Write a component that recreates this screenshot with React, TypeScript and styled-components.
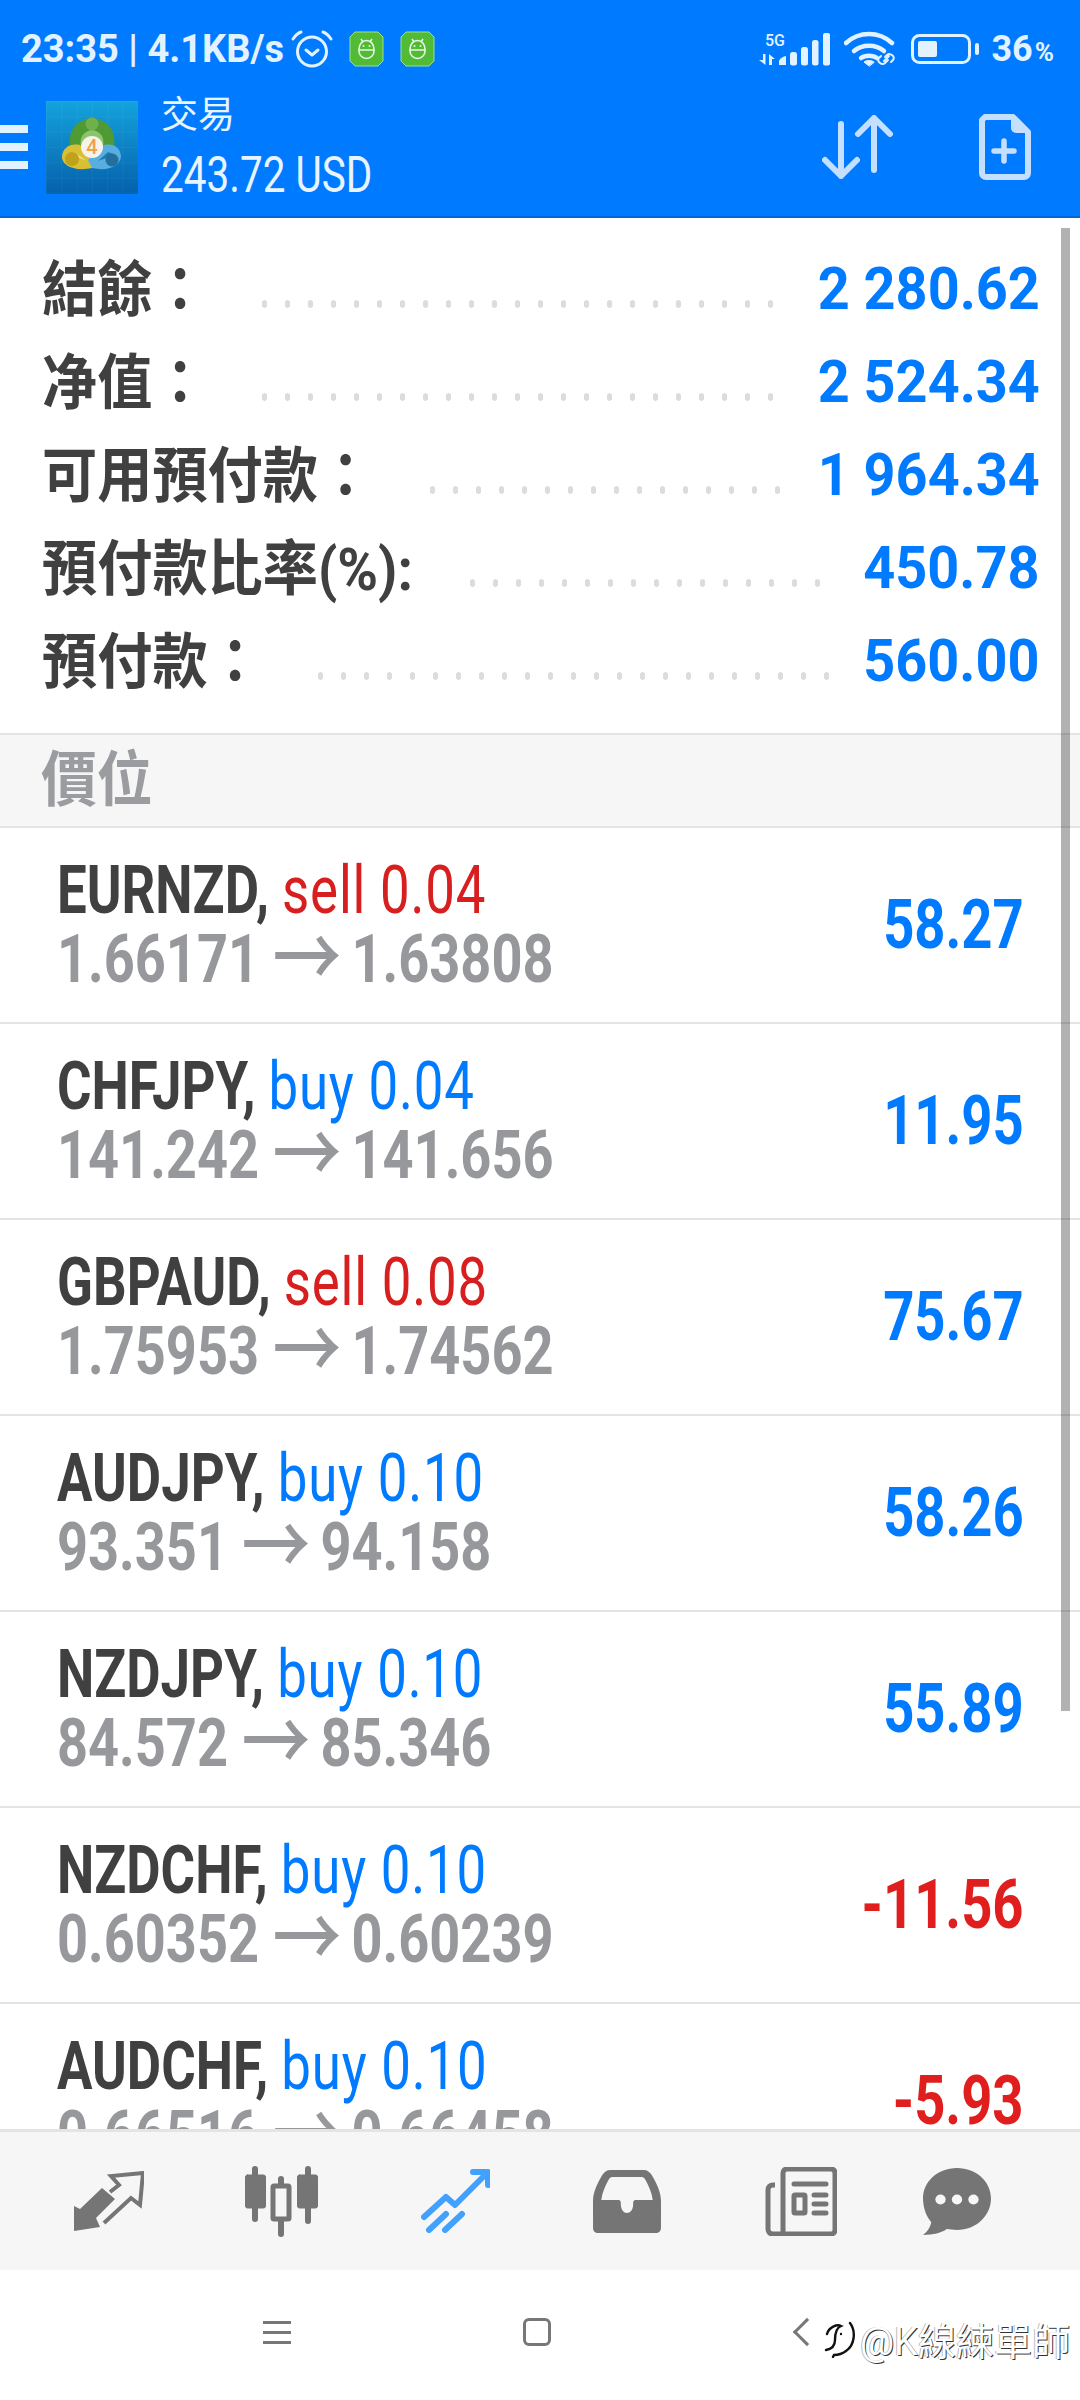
import React from 'react';
import styled, {createGlobalStyle} from 'styled-components';

const GlobalStyle = createGlobalStyle`
  html, body {
    margin: 0;
    padding: 0;
    background: #fff;
  }
  * {
    box-sizing: border-box;
  }
`;

const BLUE = '#007aff';
const RED = '#d81f1f';
const FONT = `Roboto, "Noto Sans CJK TC", sans-serif`;

const summary = [
  {label: '結餘：', value: '2 280.62', labelWidth: 211, valueWidth: 258},
  {label: '净值：', value: '2 524.34', labelWidth: 211, valueWidth: 258},
  {label: '可用預付款：', value: '1 964.34', labelWidth: 379, valueWidth: 251},
  {label: '預付款比率(%):', value: '450.78', labelWidth: 419, valueWidth: 211},
  {label: '預付款：', value: '560.00', labelWidth: 267, valueWidth: 202},
];

const positions = [
  {symbol: 'EURNZD,', side: 'sell 0.04', open: '1.66171', close: '1.63808', profit: '58.27'},
  {symbol: 'CHFJPY,', side: 'buy 0.04', open: '141.242', close: '141.656', profit: '11.95'},
  {symbol: 'GBPAUD,', side: 'sell 0.08', open: '1.75953', close: '1.74562', profit: '75.67'},
  {symbol: 'AUDJPY,', side: 'buy 0.10', open: '93.351', close: '94.158', profit: '58.26'},
  {symbol: 'NZDJPY,', side: 'buy 0.10', open: '84.572', close: '85.346', profit: '55.89'},
  {symbol: 'NZDCHF,', side: 'buy 0.10', open: '0.60352', close: '0.60239', profit: '-11.56'},
  {symbol: 'AUDCHF,', side: 'buy 0.10', open: '0.66516', close: '0.66458', profit: '-5.93'},
];

const AndroidBadge = () => (
  <svg width="35" height="36" viewBox="0 0 35 36">
    <path d="M6 1h23l5 5v24l-5 5H6l-5-5V6z" fill="#52bb36" stroke="#9adf8c" strokeWidth="1" />
    <path d="M10 18a7.5 8.5 0 0 1 15 0v2a7.5 7.5 0 0 1-15 0z" fill="none" stroke="#e8f8e2" strokeWidth="1.6" />
    <path d="M10 19h15M12 8l2 3M23 8l-2 3" stroke="#e8f8e2" strokeWidth="1.6" fill="none" />
    <circle cx="14.5" cy="15" r="1" fill="#e8f8e2" />
    <circle cx="20.5" cy="15" r="1" fill="#e8f8e2" />
  </svg>
);

const AlarmIcon = () => (
  <svg width="42" height="38" viewBox="0 0 42 38" fill="none" stroke="#e3f2ff" strokeLinecap="round">
    <circle cx="21" cy="21.5" r="14.5" strokeWidth="3" />
    <path d="M15 20l6 5 6-5" strokeWidth="3" strokeLinejoin="round" />
    <path d="M2 9c2-3 5-6 8-7M40 9c-2-3-5-6-8-7" strokeWidth="3" />
  </svg>
);

const SignalIcon = () => (
  <svg width="71" height="33" viewBox="0 0 71 33" fill="#e3f2ff">
    <text x="6" y="13" fontFamily="Roboto, sans-serif" fontSize="16" fontWeight="500">5G</text>
    <path d="M4 21h2.500v11L0 27h4zM10 32V21l6 5h-3v6z" />
    <path d="M20 32v-4c0-2 5-5 7-5v9z" />
    <rect x="31" y="19" width="7" height="13.500" rx="2.500" />
    <rect x="42" y="14" width="7" height="18.500" rx="2.500" />
    <rect x="53" y="7" width="6.500" height="25.500" rx="2.500" />
    <rect x="64" y="0" width="7" height="32.500" rx="2" />
  </svg>
);

const WifiIcon = () => (
  <svg width="53" height="36" viewBox="0 0 53 36" fill="none" stroke="#e3f2ff" strokeLinecap="round">
    <path d="M2 12c13-12 33-12 46 0" strokeWidth="4.500" />
    <path d="M10 20c8-7 22-7 30 0" strokeWidth="4.500" />
    <path d="M17 27c4-3 12-3 16 0" strokeWidth="4.500" />
    <path d="M25 35l-5-4c2-2 8-2 10 0z" fill="#e3f2ff" strokeWidth="1" />
    <path d="M40 30l5-5M41 26l2-2c3-3 9 2 6 5l-2 2M44 29l-3 3c-3 3-9-2-6-5l2-2" strokeWidth="2" />
  </svg>
);

const BatteryIcon = () => (
  <svg width="68" height="30" viewBox="0 0 68 30">
    <rect x="1.500" y="1.500" width="57" height="27" rx="7" fill="none" stroke="#e3f2ff" strokeWidth="3" />
    <rect x="7" y="7" width="19" height="16" rx="2" fill="#e3f2ff" />
    <rect x="64" y="9" width="4" height="12" rx="2" fill="#e3f2ff" />
  </svg>
);

const MtLogo = () => (
  <svg width="92" height="93" viewBox="0 0 92 93">
    <defs>
      <linearGradient id="logoBg" x1="0" y1="0" x2="0" y2="1">
        <stop offset="0" stopColor="#14a3dc" />
        <stop offset="1" stopColor="#0560ab" />
      </linearGradient>
      <pattern id="logoGrid" width="15.300" height="15.300" patternUnits="userSpaceOnUse">
        <path d="M15.300 0H0V15.300" fill="none" stroke="#fff" strokeOpacity=".08" strokeWidth="1" />
      </pattern>
    </defs>
    <rect width="92" height="93" fill="url(#logoBg)" />
    <rect width="92" height="93" fill="url(#logoGrid)" />
    <path d="M46 17c-17 2-26 14-21 34h42c5-20-4-32-21-34z" fill="#4f9a35" />
    <path d="M46 29c-8 1-13 7-11 16h22c2-9-3-15-11-16z" fill="#8cc46a" />
    <path d="M34 44c-10-2-17 3-18 11-1 9 12 16 30 12l4-8z" fill="#d9bf33" />
    <path d="M28 51c-4 1-6 2-6 4 5 0 13 2 19 5z" fill="#efe08a" />
    <path d="M58 44c10-2 16 3 17 11 0 9-12 16-29 12l-4-8z" fill="#58aede" />
    <path d="M62 51c3 1 6 2 6 4-5 1-11 3-16 5z" fill="#1f79b4" />
    <circle cx="46" cy="23" r="6.500" fill="#6eb14b" />
    <circle cx="26" cy="58" r="7" fill="#bfa11c" />
    <circle cx="66" cy="59" r="6.500" fill="#226f9d" />
    <circle cx="46" cy="46" r="11" fill="#f7f2ea" />
    <text x="46" y="53" textAnchor="middle" fontFamily="Roboto, sans-serif" fontSize="20" fontWeight="500" fill="#f0a24a">4</text>
  </svg>
);

const SortIcon = () => (
  <svg width="72" height="64" viewBox="0 0 72 64" fill="none" stroke="#c5e0ff" strokeWidth="6" strokeLinecap="round" strokeLinejoin="round">
    <path d="M19 9v52M3 45l16 16 16-16" />
    <path d="M52 3v52M36 19L52 3l16 16" />
  </svg>
);

const NewOrderIcon = () => (
  <svg width="52" height="66" viewBox="0 0 52 66">
    <path d="M6 3h28l15 15v41a4 4 0 0 1-4 4H7a4 4 0 0 1-4-4V6z" fill="none" stroke="#c5e0ff" strokeWidth="6" strokeLinejoin="round" />
    <path d="M32 2v12a5 5 0 0 0 5 5h13z" fill="#c5e0ff" />
    <path d="M15 37h20M25 27v20" stroke="#c5e0ff" strokeWidth="5.500" strokeLinecap="round" />
  </svg>
);

const TradeIcon = () => (
  <svg width="70" height="60" viewBox="0 0 70 60">
    <path d="M0 60V35l6 3 22-21 13 11-19 19 4 9z" fill="#757575" strokeLinejoin="round" />
    <path d="M30 52L57 27l9 7 3-32-32 3 8 9-9 7" fill="none" stroke="#757575" strokeWidth="4" />
  </svg>
);

const CandleIcon = () => (
  <svg width="73" height="71" viewBox="0 0 73 71" fill="#757575" stroke="#757575" strokeLinecap="round">
    <path d="M10 3v50M36 13v55M63 3v52" strokeWidth="6" fill="none" />
    <rect x="0.500" y="9" width="20" height="33" rx="2" strokeWidth="1" />
    <rect x="28" y="20" width="16" height="33" rx="1" fill="#f6f6f6" strokeWidth="5" />
    <rect x="52.500" y="9" width="20" height="33" rx="2" strokeWidth="1" />
  </svg>
);

const TrendIcon = () => (
  <svg width="69" height="64" viewBox="0 0 69 64" fill="none" stroke="#42a0ff" strokeWidth="6" strokeLinecap="round" strokeLinejoin="round">
    <path d="M3 48l22-20 9 8 30-30" />
    <path d="M52 3h15v13" />
    <path d="M8 61l17-16M24 61l17-16" />
  </svg>
);

const InboxIcon = () => (
  <svg width="70" height="64" viewBox="0 0 68 64" preserveAspectRatio="none" fill="#757575">
    <path d="M18 1h32c4 0 6 2 8 5 5 9 9 17 9 26v27c0 3-2 5-5 5H6c-3 0-5-2-5-5V32C1 23 5 15 10 6c2-3 4-5 8-5zM20 8c-2 0-3 1-4 3-3 6-6 12-7 20h16c3 0 3 2 3 4 0 6 3 9 6 9s6-3 6-9c0-2 0-4 3-4h16c-1-8-4-14-7-20-1-2-2-3-4-3z" fillRule="evenodd" />
  </svg>
);

const NewsIcon = () => (
  <svg width="72" height="69" viewBox="0 0 72 69" fill="none" stroke="#757575">
    <path d="M18 66V6c0-3 2-4 4-4h44c2 0 4 1 4 4v57c0 2-1 4-4 4H8c-3 0-5-2-5-5V23c0-3 2-5 5-5h2" strokeWidth="5" />
    <path d="M29 17h32" strokeWidth="5" strokeLinecap="round" />
    <rect x="29" y="28" width="11" height="18" rx="1" strokeWidth="5" />
    <path d="M49 28h12M49 37h12M49 46h12" strokeWidth="5" strokeLinecap="round" />
  </svg>
);

const ChatIcon = () => (
  <svg width="70" height="69" viewBox="0 0 68 70" preserveAspectRatio="none">
    <path d="M34 1c19 0 33 14 33 31S53 64 34 64c-4 0-7-1-10-1-5 4-13 6-23 6 4-3 7-8 8-13C4 50 1 41 1 32 1 15 15 1 34 1z" fill="#757575" />
    <circle cx="18" cy="33" r="5" fill="#f6f6f6" />
    <circle cx="34" cy="33" r="5" fill="#f6f6f6" />
    <circle cx="50" cy="33" r="5" fill="#f6f6f6" />
  </svg>
);

const ThreadsMark = () => (
  <svg width="34" height="38" viewBox="0 0 34 38" fill="none" stroke="#111" strokeWidth="2.400" strokeLinecap="round">
    <path d="M3 14c2-7 10-10 14-8-5 2-6 8-6 14 0 6-3 9-9 10" />
    <path d="M26 3c6 8 5 22-4 28-4 3-8 4-12 4l-1 2" />
    <circle cx="17" cy="14" r="1.200" fill="#111" stroke="none" />
  </svg>
);

const App = () => {
  return (
    <Page>
      <GlobalStyle />
      <Header>
        <StatusBar>
          <StatusLeft>
            <StatusText>23:35 | 4.1KB/s</StatusText>
            <AlarmIcon />
            <AndroidBadge />
            <AndroidBadge />
          </StatusLeft>
          <StatusRight>
            <SignalIcon />
            <WifiIcon />
            <BatteryIcon />
            <BatteryText>36<small>%</small></BatteryText>
          </StatusRight>
        </StatusBar>
        <Toolbar>
          <MenuBars><i /><i /><i /></MenuBars>
          <MtLogo />
          <TitleBlock>
            <Title>交易</Title>
            <Balance>243.72 USD</Balance>
          </TitleBlock>
          <ToolActions>
            <SortIcon />
            <NewOrderIcon />
          </ToolActions>
        </Toolbar>
      </Header>

      <Content>
        <ScrollThumb />
        <Summary>
          {summary.map(row => (
            <SummaryRow key={row.label}>
              <SummaryLabel $width={row.labelWidth}><span>{row.label}</span></SummaryLabel>
              <Leader />
              <SummaryValue $width={row.valueWidth}><span>{row.value}</span></SummaryValue>
            </SummaryRow>
          ))}
        </Summary>
        <SectionHead><span>價位</span></SectionHead>
        {positions.map(p => (
          <PositionRow key={p.symbol}>
            <PositionInfo>
              <PositionTitle>
                <b>{p.symbol}</b> <Side $sell={p.side.startsWith('sell')}>{p.side}</Side>
              </PositionTitle>
              <Prices>{p.open} <Arrow>→</Arrow> {p.close}</Prices>
            </PositionInfo>
            <Profit $loss={p.profit.startsWith('-')}><span>{p.profit}</span></Profit>
          </PositionRow>
        ))}
      </Content>

      <BottomNav>
        <NavItem $left={74}><TradeIcon /></NavItem>
        <NavItem $left={101}><CandleIcon /></NavItem>
        <NavItem $left={103}><TrendIcon /></NavItem>
        <NavItem $left={102}><InboxIcon /></NavItem>
        <NavItem $left={103}><NewsIcon /></NavItem>
        <NavItem $left={85}><ChatIcon /></NavItem>
      </BottomNav>

      <SystemNav>
        <SysMenu><i /><i /><i /></SysMenu>
        <SysSquare />
        <SysBack />
        <Watermark><ThreadsMark /><span>@K線練單師</span></Watermark>
      </SystemNav>
    </Page>
  );
};

const Page = styled.div`
  width: 1080px;
  height: 2400px;
  display: flex;
  flex-direction: column;
  overflow: hidden;
  background: #fff;
  font-family: ${FONT};
`;
const Header = styled.header`
  height: 218px;
  flex: none;
  background: ${BLUE};
  border-bottom: 2px solid #0068d8;
`;
const StatusBar = styled.div`
  height: 84px;
  padding: 14px 26px 0 21px;
  display: flex;
  align-items: center;
  justify-content: space-between;
  color: #e3f2ff;
`;
const StatusLeft = styled.div`
  display: flex;
  align-items: center;
  gap: 16px;
  svg:nth-child(2) {
    margin-left: -9px;
  }
`;
const StatusText = styled.span`
  font-size: 38px;
  font-weight: 700;
  white-space: nowrap;
`;
const StatusRight = styled.div`
  display: flex;
  align-items: center;
  gap: 14px;
`;
const BatteryText = styled.span`
  font-size: 36px;
  font-weight: 700;
  margin-left: -2px;
  small {
    font-size: 26px;
    margin-left: 2px;
  }
`;
const Toolbar = styled.div`
  height: 132px;
  display: flex;
  align-items: center;
  padding-bottom: 6px;
`;
const MenuBars = styled.div`
  width: 28px;
  margin-right: 18px;
  display: flex;
  flex-direction: column;
  gap: 10px;
  i {
    display: block;
    height: 8px;
    background: #e3f2ff;
  }
`;
const TitleBlock = styled.div`
  margin-left: 23px;
  color: #e8f4ff;
`;
const Title = styled.div`
  font-size: 37px;
  line-height: 44px;
`;
const Balance = styled.div`
  font-size: 50px;
  line-height: 62px;
  margin-top: 6px;
  margin-bottom: -6px;
  transform: scaleX(.81);
  transform-origin: left;
  white-space: nowrap;
`;
const ToolActions = styled.div`
  margin-left: auto;
  margin-right: 49px;
  display: flex;
  align-items: center;
  gap: 85px;
`;
const Content = styled.main`
  position: relative;
  flex: 1;
  min-height: 0;
  overflow: hidden;
`;
const ScrollThumb = styled.div`
  position: absolute;
  top: 10px;
  right: 10px;
  width: 9px;
  height: 1483px;
  background: rgba(0, 0, 0, .3);
`;
const Summary = styled.section`
  height: 515px;
  padding: 20px 40px 0 42px;
`;
const SummaryRow = styled.div`
  height: 93px;
  display: flex;
  align-items: center;
`;
const SummaryLabel = styled.div<{$width: number}>`
  width: ${p => p.$width}px;
  flex: none;
  font-size: 60px;
  font-weight: 700;
  color: #404040;
  white-space: nowrap;
  span {
    display: inline-block;
    transform: scaleX(.92);
    transform-origin: left;
  }
`;
const Leader = styled.div`
  flex: 1;
  height: 10px;
  margin-top: 38px;
  background-image: radial-gradient(ellipse 3px 4px at center, #dcdcdc 90%, transparent 100%);
  background-size: 23px 10px;
  background-repeat: repeat-x;
`;
const SummaryValue = styled.div<{$width: number}>`
  width: ${p => p.$width}px;
  flex: none;
  margin-top: 8px;
  text-align: right;
  font-size: 60px;
  font-weight: 700;
  color: ${BLUE};
  white-space: nowrap;
  span {
    display: inline-block;
    transform: scaleX(.93);
    transform-origin: right;
  }
`;
const SectionHead = styled.div`
  height: 95px;
  padding: 0 0 12px 41px;
  display: flex;
  align-items: center;
  background: #f6f6f6;
  border-top: 2px solid #e4e4e4;
  border-bottom: 2px solid #e4e4e4;
  font-size: 60px;
  font-weight: 700;
  color: #9b9ca0;
  span {
    transform: scaleX(.93);
    transform-origin: left;
  }
`;
const PositionRow = styled.div`
  height: 196px;
  flex: none;
  padding: 28px 56px 0 57px;
  display: flex;
  justify-content: space-between;
  border-bottom: 2px solid #e4e4e4;
`;
const PositionInfo = styled.div`
  white-space: nowrap;
`;
const PositionTitle = styled.div`
  font-size: 66px;
  line-height: 70px;
  transform: scaleX(.8);
  transform-origin: left;
  b {
    font-weight: 700;
    color: #404040;
  }
`;
const Side = styled.span<{$sell: boolean}>`
  font-weight: 400;
  letter-spacing: 1px;
  color: ${p => (p.$sell ? RED : BLUE)};
`;
const Prices = styled.div`
  font-size: 66px;
  line-height: 68px;
  font-weight: 700;
  color: #97989c;
  transform: scaleX(.82);
  transform-origin: left;
`;
const Arrow = styled.span`
  font-size: 84px;
  line-height: 0;
  font-weight: 500;
  vertical-align: -6px;
  margin-right: -4px;
`;
const Profit = styled.div<{$loss: boolean}>`
  align-self: center;
  margin-bottom: 28px;
  font-size: 68px;
  font-weight: 700;
  color: ${p => (p.$loss ? '#e01e1e' : BLUE)};
  span {
    display: inline-block;
    transform: scaleX(.8);
    transform-origin: right;
  }
`;
const BottomNav = styled.nav`
  height: 141px;
  flex: none;
  display: flex;
  align-items: center;
  background: #f6f6f6;
  border-top: 3px solid #e4e4e4;
`;
const NavItem = styled.div<{$left: number}>`
  margin-left: ${p => p.$left}px;
  display: flex;
`;
const SystemNav = styled.div`
  position: relative;
  height: 130px;
  flex: none;
  display: flex;
  align-items: center;
  padding: 0 0 6px 263px;
`;
const SysMenu = styled.div`
  width: 28px;
  display: flex;
  flex-direction: column;
  gap: 7px;
  i {
    display: block;
    height: 3px;
    background: #777;
  }
`;
const SysSquare = styled.div`
  width: 28px;
  height: 28px;
  margin-left: 232px;
  border: 3px solid #777;
  border-radius: 6px;
`;
const SysBack = styled.div`
  width: 20px;
  height: 20px;
  margin-left: 246px;
  border-left: 3px solid #777;
  border-bottom: 3px solid #777;
  transform: rotate(45deg);
`;
const Watermark = styled.div`
  position: absolute;
  left: 824px;
  top: 41px;
  display: flex;
  align-items: center;
  gap: 2px;
  font-size: 38px;
  color: #fff;
  text-shadow: 1px 1px 0 #333, -1px 0 0 #bbb;
  white-space: nowrap;
`;

export default App;
